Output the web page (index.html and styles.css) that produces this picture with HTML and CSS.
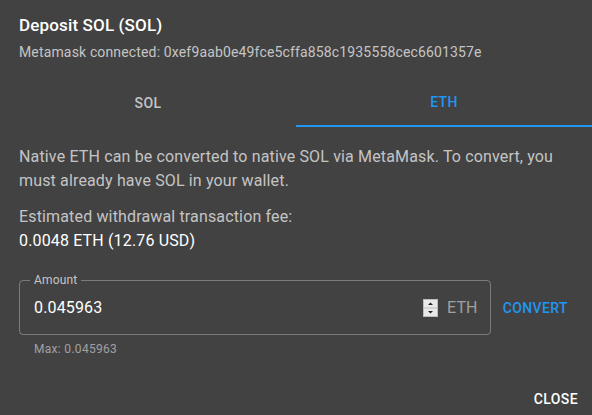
FILE: index.html
```html
<!DOCTYPE html>
<html lang="en">
<head>
  <meta charset="UTF-8" />
  <title>Deposit SOL</title>
  <link rel="stylesheet" href="styles.css">
</head>
<body>
  <div class="dialog">
    <div class="header">
      <h2 class="title">Deposit SOL (SOL)</h2>
      <p class="subtitle">Metamask connected: 0xef9aab0e49fce5cffa858c1935558cec6601357e</p>
    </div>

    <div class="tabs">
      <div class="tab">SOL</div>
      <div class="tab active">ETH</div>
    </div>

    <div class="content">
      <p class="text">Native ETH can be converted to native SOL via MetaMask. To convert, you must already have SOL in your wallet.</p>
      <p class="text fee">
        Estimated withdrawal transaction fee:<br>
        <span class="fee-value">0.0048 ETH (12.76 USD)</span>
      </p>

      <div class="amount-row">
        <fieldset class="field">
          <legend>Amount</legend>
          <span class="value">0.045963</span>
          <span class="spinner">
            <svg width="15" height="18" viewBox="0 0 15 18">
              <rect x="0.5" y="0.5" width="14" height="17" fill="#e9e9e9" stroke="#bdbdbd"/>
              <line x1="1" y1="9" x2="14" y2="9" stroke="#bdbdbd"/>
              <path d="M5 6 L7.5 3.5 L10 6 Z" fill="#222"/>
              <path d="M5 12 L7.5 14.5 L10 12 Z" fill="#222"/>
            </svg>
          </span>
          <span class="unit">ETH</span>
        </fieldset>
        <button class="btn convert">Convert</button>
      </div>
      <div class="helper">Max: 0.045963</div>
    </div>

    <div class="actions">
      <button class="btn close">Close</button>
    </div>
  </div>
</body>
</html>
```

FILE: styles.css
```css
body {
  margin: 0;
  background: #424242;
  font-family: Roboto, "Liberation Sans", sans-serif;
  color: #fff;
}

.dialog {
  width: 592px;
  height: 415px;
  display: flex;
  flex-direction: column;
}

.header {
  padding: 9px 19px 0;
}

.title {
  margin: 0;
  font-size: 17px;
  font-weight: 500;
  line-height: 32px;
  letter-spacing: 0.15px;
}

.subtitle {
  margin: 0;
  font-size: 14px;
  line-height: 22px;
  letter-spacing: 0.15px;
  color: rgba(255, 255, 255, 0.7);
}

.tabs {
  display: flex;
  margin-top: 16px;
}

.tab {
  flex: 1;
  height: 48px;
  display: flex;
  align-items: center;
  justify-content: center;
  font-size: 14px;
  font-weight: 500;
  letter-spacing: 0.4px;
  text-transform: uppercase;
  color: rgba(255, 255, 255, 0.7);
  box-sizing: border-box;
}

.tab.active {
  color: #2196f3;
  border-bottom: 2px solid #2196f3;
}

.content {
  padding: 18px 16px 0 19px;
}

.text {
  margin: 0 0 12px;
  font-size: 16px;
  line-height: 24px;
  letter-spacing: 0.15px;
  color: rgba(255, 255, 255, 0.7);
}

.fee-value {
  color: #fff;
}

.amount-row {
  display: flex;
  align-items: center;
  margin-top: 21px;
}

.field {
  flex: 1;
  margin: 0;
  height: 61px;
  box-sizing: border-box;
  padding: 0 12px 5px 14px;
  border: 1px solid rgba(255, 255, 255, 0.3);
  border-radius: 4px;
  display: flex;
  align-items: center;
}

.field legend {
  padding: 0 4px;
  margin-left: -4px;
  font-size: 12px;
  line-height: 12px;
  letter-spacing: 0.15px;
  color: rgba(255, 255, 255, 0.7);
}

.value {
  flex: 1;
  font-size: 16px;
  letter-spacing: 0.15px;
}

.spinner {
  display: flex;
  margin-right: 9px;
}

.unit {
  font-size: 16px;
  letter-spacing: 0.15px;
  color: rgba(255, 255, 255, 0.5);
}

.btn {
  background: none;
  border: none;
  font-family: Roboto, "Liberation Sans", sans-serif;
  font-size: 14px;
  font-weight: 500;
  letter-spacing: 0.4px;
  text-transform: uppercase;
  cursor: pointer;
  padding: 6px 8px;
}

.convert {
  color: #2196f3;
  margin-left: 4px;
  margin-top: 6px;
}

.helper {
  font-size: 12px;
  letter-spacing: 0.3px;
  color: rgba(255, 255, 255, 0.5);
  padding: 7px 0 0 15px;
}

.actions {
  margin-top: auto;
  display: flex;
  justify-content: flex-end;
  padding: 0 6px 2px;
}

.close {
  color: #fff;
}
```
